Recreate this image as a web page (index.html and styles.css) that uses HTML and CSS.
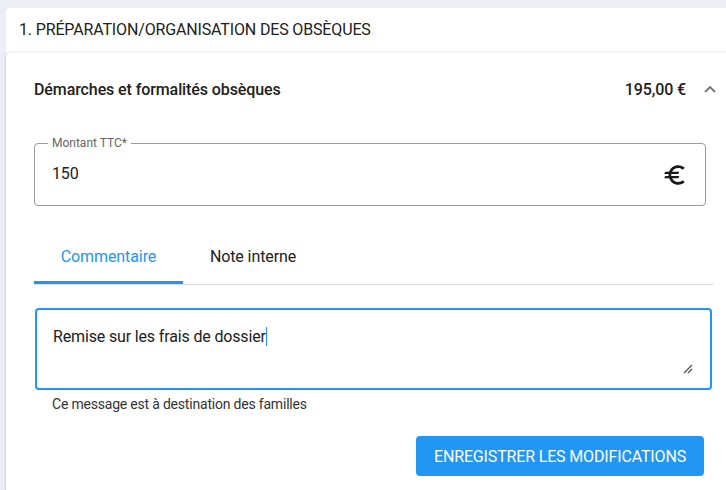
FILE: index.html
```html
<!DOCTYPE html>
<html lang="fr">

<head>
    <meta charset="UTF-8">
    <meta name="viewport" content="width=device-width, initial-scale=1.0">
    <title>Préparation des obsèques</title>
    <link rel="stylesheet" href="styles.css">
</head>

<body>
    <div id="page">
        <div class="section-head">1. PRÉPARATION/ORGANISATION DES OBSÈQUES</div>

        <div class="panel">
            <div class="panel-head">
                <span class="panel-title">Démarches et formalités obsèques</span>
                <span class="panel-total">195,00 €</span>
                <svg class="chevron" width="24" height="24" viewBox="0 0 24 24">
                    <path d="M7 15 12 10l5 5" fill="none" stroke="#757575" stroke-width="1.8" />
                </svg>
            </div>

            <div class="panel-body">
                <fieldset class="field">
                    <legend>Montant TTC*</legend>
                    <span class="field-value">150</span>
                    <svg class="field-unit" width="26" height="26" viewBox="0 0 24 24">
                        <path d="M15 18.5c-2.51 0-4.68-1.42-5.760-3.5H15l1-2H8.58c-.05-.33-.08-.66-.08-1s.03-.67.08-1H15l1-2H9.24C10.32 6.92 12.5 5.5 15 5.5c1.61 0 3.09.59 4.23 1.57L21 5.3C19.41 3.87 17.3 3 15 3c-3.92 0-7.24 2.51-8.48 6H3l-1 2h4.06c-.04.33-.06.66-.06 1s.02.67.06 1H3l-1 2h4.52c1.24 3.49 4.56 6 8.48 6 2.31 0 4.41-.87 6-2.3l-1.78-1.77c-1.13.98-2.6 1.57-4.22 1.57z" fill="#1a1a1a" />
                    </svg>
                </fieldset>

                <div class="tabs">
                    <div class="tab active">Commentaire</div>
                    <div class="tab">Note interne</div>
                </div>

                <div class="comment-box">
                    <div class="comment-text">Remise sur les frais de dossier<span class="caret"></span></div>
                    <svg class="resize" width="10" height="10" viewBox="0 0 10 10">
                        <path d="M1 9 9 1M5 9 9 5" stroke="#555" stroke-width="1.4" />
                    </svg>
                </div>
                <p class="helper">Ce message est à destination des familles</p>

                <div class="actions">
                    <button class="button">Enregistrer les modifications</button>
                </div>
            </div>
        </div>
    </div>
</body>

</html>
```

FILE: styles.css
```css
* {
    margin: 0;
    padding: 0;
    box-sizing: border-box;
}

body {
    background-color: #ecedf5;
    font-family: Roboto, "Liberation Sans", sans-serif;
    color: #212121;
    overflow: hidden;
}

#page {
    padding: 8px 0 0 6px;
    width: 740px;
}

.section-head {
    background-color: white;
    border-radius: 4px 0 0 0;
    height: 45px;
    padding: 12px 0 0 13px;
    font-size: 16px;
    letter-spacing: -0.15px;
}

.panel {
    background-color: white;
    border-radius: 4px 0 0 0;
    box-shadow: 0 -1px 4px rgba(0, 0, 0, 0.08), -1px 0 1px rgba(0, 0, 0, 0.06);
    height: 440px;
}

.panel-head {
    display: flex;
    align-items: center;
    height: 72px;
    padding: 0 0 0 28px;
}

.panel-title {
    flex: 1;
    font-size: 16px;
    font-weight: 500;
    letter-spacing: -0.1px;
}

.panel-total {
    font-size: 16px;
    font-weight: 500;
    letter-spacing: -0.1px;
}

.chevron {
    margin: 0 18px 0 12px;
}

.panel-body {
    padding: 11px 14px 0 28px;
}

/* Outlined field */
.field {
    border: 1px solid #9b9b9b;
    border-radius: 4px;
    height: 70px;
    width: 672px;
    display: flex;
    align-items: center;
    padding: 0 17px 0 17px;
}

.field legend {
    font-size: 12px;
    color: #666;
    padding: 0 4px;
    margin-left: -4px;
}

.field-value {
    flex: 1;
    font-size: 16px;
    margin-top: -8px;
    letter-spacing: -0.15px;
}

.field-unit {
    margin-top: -6px;
}

/* Tabs */
.tabs {
    display: flex;
    margin-top: 27px;
    border-bottom: 1px solid #dadce0;
    width: 679px;
}

.tab {
    height: 51px;
    padding-top: 14px;
    font-size: 16px;
    text-align: center;
    letter-spacing: -0.1px;
}

.tab.active {
    width: 149px;
    color: #2196f3;
    border-bottom: 3px solid #2196f3;
    margin-bottom: -1px;
}

.tab + .tab {
    width: 140px;
}

/* Comment */
.comment-box {
    position: relative;
    margin-top: 23px;
    margin-left: 1px;
    width: 677px;
    height: 82px;
    border: 2px solid #2196f3;
    border-radius: 4px;
    padding: 17px 16px;
}

.comment-text {
    font-size: 16px;
    letter-spacing: -0.15px;
}

.caret {
    display: inline-block;
    width: 1px;
    height: 19px;
    background-color: #2196f3;
    vertical-align: -4px;
}

.resize {
    position: absolute;
    right: 17px;
    bottom: 14px;
}

.helper {
    font-size: 14px;
    color: #333;
    padding: 6px 0 0 18px;
    letter-spacing: -0.2px;
}

.actions {
    display: flex;
    justify-content: flex-end;
    width: 670px;
    margin-top: 24px;
}

.button {
    background-color: #2196f3;
    color: white;
    border: none;
    border-radius: 4px;
    width: 288px;
    height: 40px;
    font-family: Roboto, sans-serif;
    font-size: 16px;
    text-transform: uppercase;
    letter-spacing: -0.15px;
}
```
